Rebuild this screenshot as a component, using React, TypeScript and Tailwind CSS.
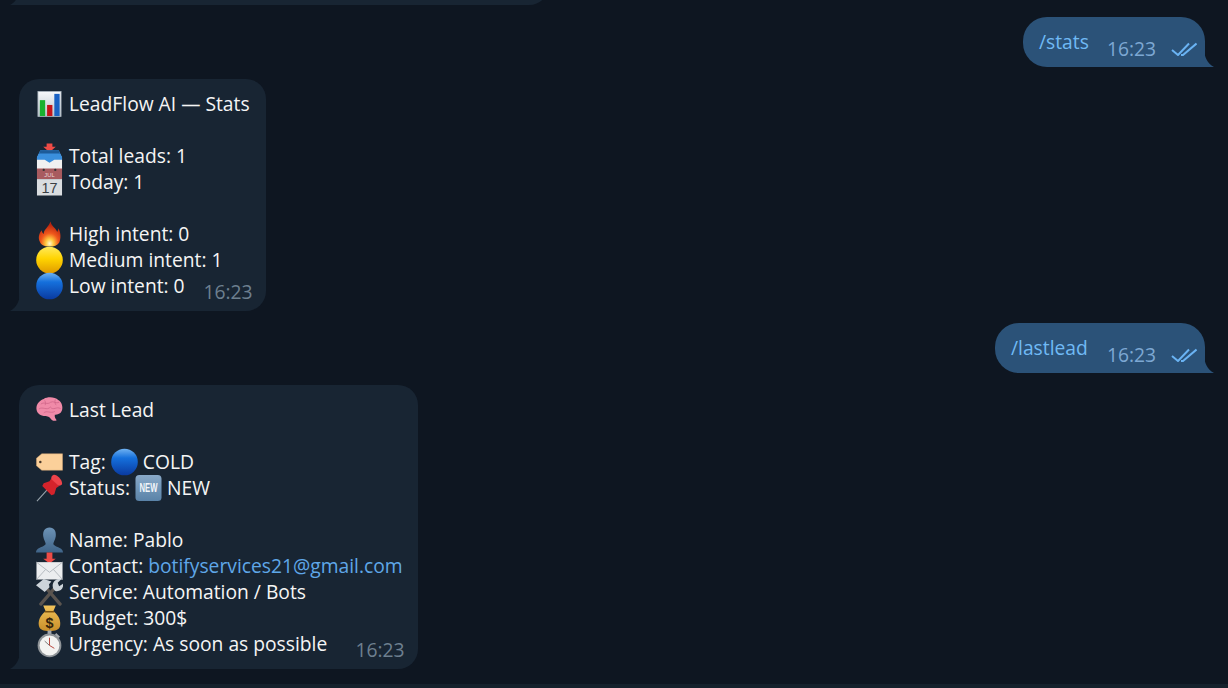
import React from 'react';

const Emoji = ({ name }: { name: string }) => {
  const box = 'inline-block w-[27px] h-[28px] -my-px shrink-0 align-middle';
  switch (name) {
    case 'chart':
      return (
        <svg viewBox="0 0 28 28" className={box}>
          <defs>
            <linearGradient id="chartBg" x1="0" y1="0" x2="0" y2="1">
              <stop offset="0%" stopColor="#f7f9fb" />
              <stop offset="100%" stopColor="#b9c3cb" />
            </linearGradient>
          </defs>
          <rect x="2" y="1" width="24" height="26" fill="url(#chartBg)" stroke="#a9b4bd" strokeWidth="0.8" />
          <rect x="4" y="10" width="5.5" height="16.5" fill="#19b12f" />
          <rect x="11.5" y="15" width="5.5" height="11.5" fill="#c4141a" />
          <rect x="19" y="3.5" width="5.5" height="23" fill="#1a62c4" />
        </svg>
      );
    case 'inbox':
      return (
        <svg viewBox="0 0 28 28" className={box}>
          <path d="M14 10 L7.5 4.5 H11 V1 H17 V4.5 H20.5 Z" fill="#ee4b46" />
          <path d="M4.5 9 H23.5 L27 16 V28 H1 V16 Z" fill="#f1f1f1" />
          <path d="M4.5 8 H23.5 L27 15 V18 H19 L14 21 L9 18 H1 V15 Z" fill="#3a8fdd" />
          <path d="M4.5 8 H23.5 L25 11.5 H3 Z" fill="#1d5b98" />
        </svg>
      );
    case 'calendar':
      return (
        <svg viewBox="0 0 28 28" className={box}>
          <rect x="1" y="0" width="26" height="11" fill="#a85b5f" />
          <rect x="1" y="11" width="26" height="17" fill="#d9dde0" />
          <circle cx="8" cy="1.5" r="1.2" fill="#333" />
          <circle cx="20" cy="1.5" r="1.2" fill="#333" />
          <text x="14" y="9" textAnchor="middle" fontSize="6" fontFamily="'Liberation Sans', sans-serif" fill="#ecd6d6">JUL</text>
          <text x="14" y="25.5" textAnchor="middle" fontSize="15" fontFamily="'Liberation Sans', sans-serif" fill="#3a3f44">17</text>
        </svg>
      );
    case 'fire':
      return (
        <svg viewBox="0 0 28 28" className={box}>
          <defs>
            <radialGradient id="fireG" cx="50%" cy="88%" r="75%">
              <stop offset="0%" stopColor="#fff9d0" />
              <stop offset="24%" stopColor="#ffc93f" />
              <stop offset="55%" stopColor="#f0581c" />
              <stop offset="100%" stopColor="#b8240f" />
            </radialGradient>
          </defs>
          <path d="M15 1 C16 6 21 8 22 12 C23 10 23 9 23 8 C26 12 26 19 24 23 C22 26 19 27 14 27 C8 27 5 25 4 22 C2 18 3 13 6 10 C6 12 7 13 8 14 C8 9 13 7 15 1 Z" fill="url(#fireG)" />
        </svg>
      );
    case 'yellow':
    case 'blue': {
      const id = name === 'yellow' ? 'ballY' : 'ballB';
      return (
        <svg viewBox="0 0 28 28" className={box}>
          <defs>
            <linearGradient id={id} x1="0" y1="0" x2="0" y2="1">
              {name === 'yellow' ? (
                <>
                  <stop offset="0%" stopColor="#ffe95c" />
                  <stop offset="45%" stopColor="#ffd400" />
                  <stop offset="100%" stopColor="#e09a00" />
                </>
              ) : (
                <>
                  <stop offset="0%" stopColor="#6fb2f2" />
                  <stop offset="35%" stopColor="#1570dc" />
                  <stop offset="100%" stopColor="#0a3aa0" />
                </>
              )}
            </linearGradient>
          </defs>
          <circle cx="14" cy="14" r="13.8" fill={`url(#${id})`} />
        </svg>
      );
    }
    case 'brain':
      return (
        <svg viewBox="0 0 28 28" className={box}>
          <path d="M8 2.5 C12 0 20 0.5 23 3.5 C27 5.5 28 11 27 14 C26 18 22 19 19.5 19 C19 21.5 20.5 23.5 21.5 24.5 C19 26 16 25 14.5 22 C12.5 20 10 21 7 20 C2 19 0 15 0.5 11 C1 7 4 4 8 2.5 Z" fill="#f08aa8" />
          <path d="M5 8 C8 5 12 9 15 6 M3 13 C7 10 11 15 15 11 M15 6 C18 4 21 8 24 6 M15 11 C18 15 21 10 25.5 12.5 M8 17 C11 14 15 18 19.5 15.5 M9 4 C10 6 10 7 9.5 9 M20 3 C19 6 20 8 21 9" fill="none" stroke="#cf6688" strokeWidth="0.8" />
        </svg>
      );
    case 'tag':
      return (
        <svg viewBox="0 0 28 28" className={box}>
          <path d="M6 5.5 H27.5 V22.5 H6 L0.5 18 V10 Z" fill="#fbd09a" stroke="#d8a873" strokeWidth="0.5" />
          <circle cx="4.5" cy="14" r="1.3" fill="#4a3a2a" />
        </svg>
      );
    case 'pin':
      return (
        <svg viewBox="0 0 28 28" className={box}>
          <path d="M1 27.5 L12 15.5" stroke="#9aa5ad" strokeWidth="1.1" />
          <path d="M16 4 L24 12 L21 14 L19 20.5 L16 21.5 L6.5 12 L8 9 L14 7 Z" fill="#d4232b" />
          <path d="M18 0.5 C21 -0.5 27 5 27 9 C27 11 25 12 23 11.5 L16 5 C15.5 3 16 1.5 18 0.5 Z" fill="#ee434a" />
        </svg>
      );
    case 'new':
      return (
        <svg viewBox="0 0 28 28" className={box}>
          <defs>
            <linearGradient id="newBg" x1="0" y1="0" x2="0" y2="1">
              <stop offset="0%" stopColor="#88a9c8" />
              <stop offset="100%" stopColor="#5a83a8" />
            </linearGradient>
          </defs>
          <rect x="0.5" y="0.5" width="27" height="27" rx="4" fill="url(#newBg)" />
          <text transform="translate(14 18.5) scale(0.8 1.25)" textAnchor="middle" fontSize="10" fontWeight="700" fontFamily="'Liberation Sans', sans-serif" fill="#f2f6fa">NEW</text>
        </svg>
      );
    case 'person':
      return (
        <svg viewBox="0 0 28 28" className={box}>
          <defs>
            <linearGradient id="personG" x1="0" y1="0" x2="0" y2="1">
              <stop offset="0%" stopColor="#6d93b6" />
              <stop offset="100%" stopColor="#3f6488" />
            </linearGradient>
          </defs>
          <path d="M14 1 C19 1 21 5 20.5 10 C20 14 18 16 18 18 C18 20 22 21 26 23 C27 24 28 25 28 27 H0 C0 25 1 24 2 23 C6 21 10 20 10 18 C10 16 8 14 7.5 10 C7 5 9 1 14 1 Z" fill="url(#personG)" />
        </svg>
      );
    case 'mail':
      return (
        <svg viewBox="0 0 28 28" className={box}>
          <path d="M14 11.5 L7.5 6.5 H11 V0 H17 V6.5 H20.5 Z" fill="#ee4b46" />
          <rect x="0.5" y="10" width="27" height="18" fill="#ebedef" />
          <path d="M0.5 10 L14 20.5 L27.5 10 M0.5 28 L10 17.5 M27.5 28 L18 17.5" fill="none" stroke="#aeb4ba" strokeWidth="0.9" />
        </svg>
      );
    case 'tools':
      return (
        <svg viewBox="0 0 28 28" className={box}>
          <path d="M8 7 L25 26.5" stroke="#5a544f" strokeWidth="3.4" strokeLinecap="round" />
          <path d="M21 8 L5 26.5" stroke="#5a544f" strokeWidth="3.4" strokeLinecap="round" />
          <path d="M0 7 L8 0.5 L16 3 L13.5 6 L14 9 L9 14 Z" fill="#cdd4da" />
          <path d="M18 11 C15.5 5 20 -0.5 26.5 0.5 L22.5 4.5 L24 8 L28 5.5 C29 11 24.5 14 20 13 Z" fill="#cdd4da" />
        </svg>
      );
    case 'money':
      return (
        <svg viewBox="0 0 28 28" className={box}>
          <defs>
            <linearGradient id="moneyG" x1="0" y1="0" x2="0" y2="1">
              <stop offset="0%" stopColor="#f1c35a" />
              <stop offset="100%" stopColor="#c98f2a" />
            </linearGradient>
          </defs>
          <path d="M7.5 1 L20.5 1 L18 7 C23.5 11 26 17 25 22 C24 26.5 20 27.5 14 27.5 C8 27.5 4 26.5 3 22 C2 17 4.5 11 10 7 Z" fill="url(#moneyG)" />
          <path d="M9 7.5 H19" stroke="#7a5212" strokeWidth="1.6" />
          <text x="14" y="24" textAnchor="middle" fontSize="15" fontWeight="700" fontFamily="'Liberation Sans', sans-serif" fill="#33240c">$</text>
        </svg>
      );
    case 'watch':
      return (
        <svg viewBox="0 0 28 28" className={box}>
          <rect x="12" y="0" width="4" height="4" fill="#a3a8ad" />
          <path d="M21 2.5 L25 6.5 L23 8 L19.5 4.5 Z" fill="#a3a8ad" />
          <circle cx="14" cy="15.5" r="12.3" fill="#8f9498" />
          <circle cx="14" cy="15.5" r="10.3" fill="#f3f3f1" />
          <path d="M14 15.5 L14 7.5 M14 15.5 L19 18.5" stroke="#b8443a" strokeWidth="1" />
          <path d="M14 15.5 L9 11" stroke="#555" strokeWidth="0.8" />
        </svg>
      );
    default:
      return null;
  }
};

const Line = ({ icon, children }: { icon?: string; children?: React.ReactNode }) => (
  <div className="h-[26px] flex items-center whitespace-pre">
    {icon && <span className="w-[27px] mr-[6px] flex items-center"><Emoji name={icon} /></span>}
    <span className="flex items-center">{children}</span>
  </div>
);

const InTail = () => (
  <svg viewBox="0 0 10 18" className="absolute left-[-9px] bottom-0 w-[10px] h-[18px]">
    <path d="M10 0 C9.5 8 7 14 0 18 H10 Z" fill="#182533" />
  </svg>
);

const OutTail = () => (
  <svg viewBox="0 0 10 18" className="absolute right-[-9px] bottom-0 w-[10px] h-[18px]">
    <path d="M0 0 C0.5 8 3 14 10 18 H0 Z" fill="#2b5278" />
  </svg>
);

const Outgoing = ({ text, textWidth }: { text: string; textWidth: string }) => (
  <div className="self-end mr-[23px] relative h-[50px] rounded-[24px] rounded-br-none bg-[#2b5278] pl-[16px] pr-[8px] flex">
    <span className={`text-[#70baf5] mt-[12px] leading-[26px] ${textWidth}`}>{text}</span>
    <span className="ml-[18px] mt-[19px] w-[49px] leading-[26px] text-[#7da8d3]">16:23</span>
    <svg viewBox="0 0 26 14" className="w-[26px] h-[14px] ml-[15px] mt-[25px]">
      <path d="M1 8 L7 13 L18 1.5 M10 13 L12 13 L25.5 1.5" fill="none" stroke="#6ab3f3" strokeWidth="2" />
    </svg>
    <OutTail />
  </div>
);

const Incoming = ({ children, right }: { children: React.ReactNode; right: string }) => (
  <div className={`self-start ml-[19px] relative rounded-[20px] rounded-bl-none bg-[#182533] pl-[17px] pt-[12px] pb-[12px] ${right}`}>
    {children}
    <span className="absolute right-[13px] bottom-[6px] leading-[26px] text-[#6d7f8f]">16:23</span>
    <InTail />
  </div>
);

export default function App() {
  return (
    <div className="h-screen overflow-hidden bg-[#0e1621] flex flex-col gap-[12px] text-[19.25px] text-[#f5f5f5] font-['Open_Sans',sans-serif]">
      <div className="self-start ml-[19px] -mt-[55px] relative w-[530px] h-[60px] shrink-0 rounded-[20px] rounded-bl-none bg-[#182533]">
        <InTail />
      </div>
      <Outgoing text="/stats" textWidth="w-[50px]" />
      <Incoming right="pr-[16px]">
        <Line icon="chart">LeadFlow AI — Stats</Line>
        <Line />
        <Line icon="inbox">Total leads: 1</Line>
        <Line icon="calendar">Today: 1</Line>
        <Line />
        <Line icon="fire">High intent: 0</Line>
        <Line icon="yellow">Medium intent: 1</Line>
        <Line icon="blue">Low intent: 0</Line>
      </Incoming>
      <Outgoing text="/lastlead" textWidth="w-[78px]" />
      <Incoming right="pr-[15px]">
        <Line icon="brain">Last Lead</Line>
        <Line />
        <Line icon="tag">Tag: <Emoji name="blue" /> COLD</Line>
        <Line icon="pin">Status: <Emoji name="new" /> NEW</Line>
        <Line />
        <Line icon="person">Name: Pablo</Line>
        <Line icon="mail">Contact: <span className="text-[#5fa7e8]">botifyservices21@gmail.com</span></Line>
        <Line icon="tools">Service: Automation / Bots</Line>
        <Line icon="money">Budget: 300$</Line>
        <Line icon="watch">Urgency: As soon as possible</Line>
      </Incoming>
      <div className="mt-auto h-[4px] shrink-0 bg-[#15212c]" />
    </div>
  );
}
